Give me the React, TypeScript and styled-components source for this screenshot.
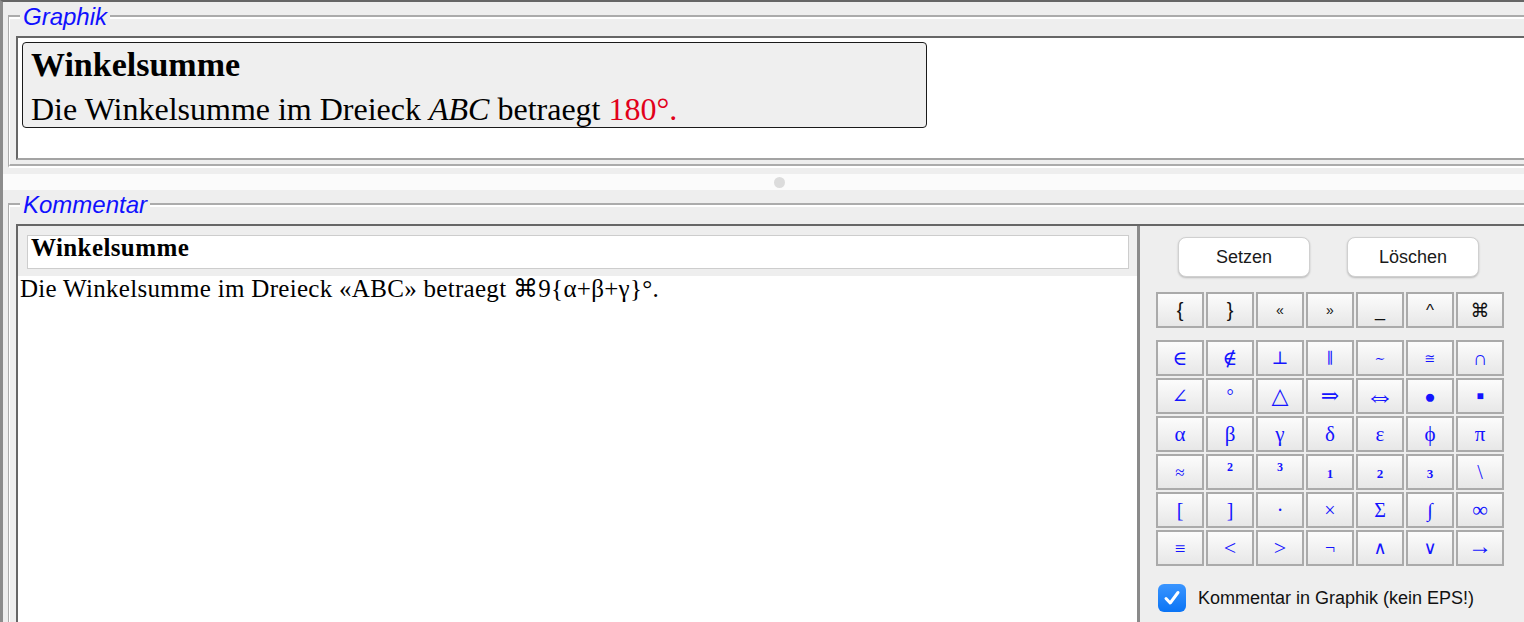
import React from "react";
import styled, { createGlobalStyle } from "styled-components";

const GlobalStyle = createGlobalStyle`
  html, body {
    margin: 0;
    padding: 0;
    overflow: hidden;
    background: #eeeeee;
  }
  * { box-sizing: border-box; }
`;

const Frame = styled.div`
  width: 1555px;
  height: 700px;
  background: #eeeeee;
  border-top: 2px solid #666666;
  border-left: 3px solid #8c8c8c;
  display: flex;
  flex-direction: column;
  overflow: hidden;
`;

const Group = styled.fieldset`
  margin: 0 5px 0 5px;
  min-width: 0;
  border-style: groove;
  border-color: #ffffff;
  border-width: 4px 2px 4px 2px;
  padding: 4px 6px 4px 6px;
`;

const Caption = styled.legend`
  margin-left: 4px;
  padding: 0 3px;
  font-family: "Liberation Sans", Arial, sans-serif;
  font-style: italic;
  font-size: 24px;
  line-height: 30px;
  color: #1010ff;
`;

const Sunken = styled.div<{ $height: number }>`
  height: ${(p) => p.$height}px;
  background: #ffffff;
  border-style: solid;
  border-width: 2px;
  border-color: #666666 #a3a3a3 #a3a3a3 #666666;
`;

const GraphicArea = styled.div`
  padding: 4px;
`;

const Card = styled.div`
  width: 905px;
  background: #efefef;
  border: 1px solid #1a1a1a;
  border-radius: 4px;
  padding: 4px 8px 0 8px;
  font-family: "Liberation Serif", "Times New Roman", serif;
  color: #000;
`;

const CardTitle = styled.div`
  font-size: 34px;
  font-weight: bold;
  line-height: 35px;
`;

const CardText = styled.div`
  margin-top: 9px;
  font-size: 32px;
  line-height: 36px;
  white-space: nowrap;
`;

const Var = styled.i`
  font-style: italic;
`;

const Value = styled.span`
  color: #e2001a;
`;

const Splitter = styled.div`
  height: 22px;
  padding-top: 6px;
`;

const SplitterBand = styled.div`
  height: 16px;
  background: #fbfbfb;
  display: flex;
  align-items: center;
  justify-content: center;
`;

const Knob = styled.span`
  width: 11px;
  height: 11px;
  border-radius: 50%;
  background: #dcdcdc;
`;

const CommentBody = styled.div`
  display: flex;
  height: 100%;
`;

const Editor = styled.div`
  flex: 0 0 1119px;
  background: #ffffff;
  display: flex;
  flex-direction: column;
`;

const TitleBar = styled.div`
  background: #eeeeee;
  padding: 9px 8px 7px 9px;
`;

const TitleField = styled.div`
  height: 34px;
  background: #ffffff;
  border: 1px solid #cdcdcd;
  padding: 0 3px;
  font-family: "Liberation Serif", "Times New Roman", serif;
  font-weight: bold;
  font-size: 25px;
  letter-spacing: 0.4px;
  line-height: 24px;
  color: #000;
`;

const EditorText = styled.div`
  padding-left: 2px;
  font-family: "Liberation Serif", "Times New Roman", "DejaVu Sans", serif;
  font-size: 25px;
  letter-spacing: 0.3px;
  line-height: 25px;
  color: #000;
  white-space: nowrap;
`;

const Divider = styled.div`
  flex: 0 0 3px;
  background: #8a8a8a;
`;

const Palette = styled.div`
  flex: 1;
  background: #eeeeee;
  padding: 11px 0 0 16px;
  display: flex;
  flex-direction: column;
`;

const ButtonRow = styled.div`
  display: flex;
  gap: 37px;
  padding-left: 22px;
`;

const PushButton = styled.button`
  width: 132px;
  height: 40px;
  border: 0.5px solid #d0d0d0;
  border-radius: 8px;
  background: #ffffff;
  box-shadow: 0 1px 2px rgba(0, 0, 0, 0.22);
  font-family: "Liberation Sans", Arial, sans-serif;
  font-size: 18px;
  color: #1a1a1a;
  padding: 0;
`;

const KeyGrid = styled.div<{ $top: number }>`
  margin-top: ${(p) => p.$top}px;
  display: grid;
  grid-template-columns: repeat(7, 48px);
  grid-auto-rows: 36px;
  gap: 2px;
`;

const Key = styled.div<{ $dark?: boolean; $size: number; $shift: number; $bold: boolean }>`
  border: 2px solid #aaaaaa;
  background: linear-gradient(#fcfcfc, #e7e7e7);
  display: flex;
  align-items: center;
  justify-content: center;
  padding-top: ${(p) => Math.max(0, p.$shift)}px;
  padding-bottom: ${(p) => Math.max(0, -p.$shift)}px;
  font-family: ${(p) =>
    p.$dark
      ? `"Liberation Sans", "DejaVu Sans", sans-serif`
      : `"Liberation Serif", "DejaVu Serif", "DejaVu Sans", serif`};
  font-weight: ${(p) => (p.$bold ? "bold" : "normal")};
  font-size: ${(p) => p.$size}px;
  color: ${(p) => (p.$dark ? "#111111" : "#1414ff")};
  line-height: 1;
`;

const CheckRow = styled.label`
  margin-top: 18px;
  padding-left: 2px;
  display: flex;
  align-items: center;
  gap: 12px;
  font-family: "Liberation Sans", Arial, sans-serif;
  font-size: 18px;
  color: #111;
`;

const CheckBox = styled.span`
  width: 28px;
  height: 28px;
  border-radius: 6px;
  background: linear-gradient(#3a95ff, #0a74f5);
  display: flex;
  align-items: center;
  justify-content: center;
`;

type K = { g: string; s: number; shift?: number; bold?: boolean };

const k = (g: string, s: number, shift = 0, bold = false): K => ({ g, s, shift, bold });

const topKeys: K[] = [
  k("{", 20),
  k("}", 20),
  k("«", 14),
  k("»", 14),
  k("_", 18),
  k("^", 17),
  k("⌘", 19),
];

const gridKeys: K[][] = [
  [k("∈", 20), k("∉", 20), k("⊥", 18), k("∥", 15), k("∼", 13), k("≅", 13), k("∩", 20)],
  [k("∠", 20), k("°", 18), k("△", 22), k("⇒", 22), k("⇔", 30), k("●", 19), k("■", 12)],
  [k("α", 21), k("β", 21), k("γ", 21), k("δ", 21), k("ε", 21), k("ϕ", 21), k("π", 21)],
  [k("≈", 17), k("2", 12, -10, true), k("3", 12, -10, true), k("1", 13, 2, true), k("2", 13, 2, true), k("3", 13, 2, true), k("\\", 20)],
  [k("[", 20), k("]", 20), k("·", 20), k("×", 20), k("Σ", 20), k("∫", 20), k("∞", 22)],
  [k("≡", 19), k("<", 22), k(">", 22), k("¬", 18), k("∧", 18), k("∨", 18), k("→", 24, -5)],
];

export default function App() {
  return (
    <>
      <GlobalStyle />
      <Frame>
        <Group>
          <Caption>Graphik</Caption>
          <Sunken $height={124}>
            <GraphicArea>
              <Card>
                <CardTitle>Winkelsumme</CardTitle>
                <CardText>
                  Die Winkelsumme im Dreieck <Var>ABC</Var> betraegt{" "}
                  <Value>180°.</Value>
                </CardText>
              </Card>
            </GraphicArea>
          </Sunken>
        </Group>
        <Splitter>
          <SplitterBand>
            <Knob />
          </SplitterBand>
        </Splitter>
        <Group>
          <Caption>Kommentar</Caption>
          <Sunken $height={440}>
            <CommentBody>
              <Editor>
                <TitleBar>
                  <TitleField>Winkelsumme</TitleField>
                </TitleBar>
                <EditorText>
                  Die Winkelsumme im Dreieck «ABC» betraegt ⌘9{"{"}α+β+γ{"}"}°.
                </EditorText>
              </Editor>
              <Divider />
              <Palette>
                <ButtonRow>
                  <PushButton>Setzen</PushButton>
                  <PushButton>Löschen</PushButton>
                </ButtonRow>
                <KeyGrid $top={15}>
                  {topKeys.map((key, i) => (
                    <Key key={i} $dark $size={key.s} $shift={key.shift ?? 0} $bold={!!key.bold}>
                      {key.g}
                    </Key>
                  ))}
                </KeyGrid>
                <KeyGrid $top={12}>
                  {gridKeys.flat().map((key, i) => (
                    <Key key={i} $size={key.s} $shift={key.shift ?? 0} $bold={!!key.bold}>
                      {key.g}
                    </Key>
                  ))}
                </KeyGrid>
                <CheckRow>
                  <CheckBox>
                    <svg width="20" height="20" viewBox="0 0 20 20">
                      <path
                        d="M4 10.5 L8.2 15 L16 4.5"
                        fill="none"
                        stroke="#ffffff"
                        strokeWidth="3"
                        strokeLinecap="round"
                        strokeLinejoin="round"
                      />
                    </svg>
                  </CheckBox>
                  Kommentar in Graphik (kein EPS!)
                </CheckRow>
              </Palette>
            </CommentBody>
          </Sunken>
        </Group>
      </Frame>
    </>
  );
}
